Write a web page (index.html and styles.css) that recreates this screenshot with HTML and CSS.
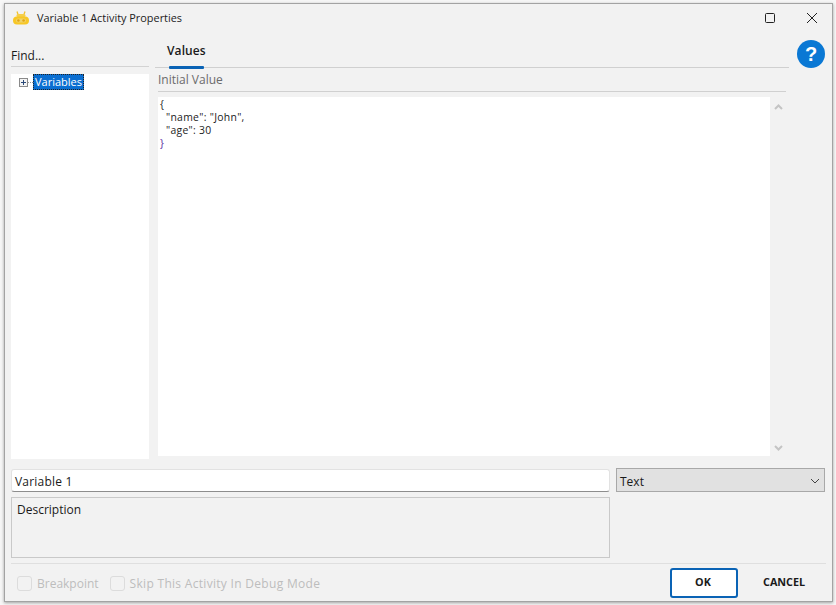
FILE: index.html
```html
<!DOCTYPE html>
<html lang="en">
<head>
<meta charset="utf-8">
<title>Variable 1 Activity Properties</title>
<link rel="stylesheet" href="styles.css">
</head>
<body>
<div class="window">
  <header class="titlebar">
    <svg class="logo" viewBox="0 0 16 14" width="16" height="14">
      <path d="M4 0.5 L5.2 4 M12 0.5 L10.8 4" stroke="#f2c230" stroke-width="1.3" fill="none"/>
      <rect x="3.5" y="3" width="9" height="3" rx="1.5" fill="#f5cf4a"/>
      <rect x="0" y="5.5" width="16" height="8" rx="4" fill="#f7c726"/>
      <rect x="3" y="7.5" width="10" height="4" rx="2" fill="#f0d46a"/>
      <circle cx="5.4" cy="9.5" r="1.3" fill="#e3a412"/>
      <circle cx="10.6" cy="9.5" r="1.3" fill="#e3a412"/>
    </svg>
    <span class="title">Variable 1 Activity Properties</span>
    <svg class="winbtn maxbtn" viewBox="0 0 10 10" width="10" height="10"><rect x="0.5" y="0.5" width="9" height="9" rx="1" fill="none" stroke="#222"/></svg>
    <svg class="winbtn closebtn" viewBox="0 0 10 10" width="10" height="10"><path d="M0 0 L10 10 M10 0 L0 10" stroke="#222" stroke-width="1" fill="none"/></svg>
  </header>
  <div class="content">
    <div class="upper">
      <aside class="sidebar">
        <div class="find">Find...</div>
        <div class="tree">
          <div class="tree-row">
            <svg class="expander" viewBox="0 0 9 9" width="9" height="9"><rect x="0.5" y="0.5" width="8" height="8" fill="#f4f4f4" stroke="#8a8a8a"/><path d="M2 4.5H7M4.5 2V7" stroke="#2b4a78"/></svg>
            <span class="dots"></span>
            <span class="tree-label">Variables</span>
          </div>
        </div>
      </aside>
      <main class="main">
        <div class="tabs"><div class="tab">Values</div></div>
        <div class="field-label">Initial Value</div>
        <div class="editor">
          <pre class="code">{
  "name": "John",
  "age": 30
<span class="brace">}</span></pre>
          <div class="scrollbar">
            <svg viewBox="0 0 9 6" width="9" height="6"><path d="M1 5 L4.5 1.5 L8 5" stroke="#c4c4c4" stroke-width="2" fill="none"/></svg>
            <svg viewBox="0 0 9 6" width="9" height="6"><path d="M1 1 L4.5 4.5 L8 1" stroke="#c4c4c4" stroke-width="2" fill="none"/></svg>
          </div>
        </div>
      </main>
      <div class="helpcol">
        <div class="help">?</div>
      </div>
    </div>
    <div class="lower">
      <div class="lower-left">
        <div class="name-input">Variable 1</div>
        <div class="description">Description</div>
      </div>
      <div class="select">
        <span>Text</span>
        <svg viewBox="0 0 10 6" width="10" height="6"><path d="M1 1 L5 5 L9 1" stroke="#444" stroke-width="1" fill="none"/></svg>
      </div>
    </div>
    <footer class="footer">
      <label class="check"><span class="box"></span>Breakpoint</label>
      <label class="check skip"><span class="box"></span>Skip This Activity In Debug Mode</label>
      <div class="spacer"></div>
      <button class="btn ok">OK</button>
      <button class="btn cancel">CANCEL</button>
    </footer>
  </div>
</div>
</body>
</html>
```
FILE: styles.css
```css
* { box-sizing: border-box; }
html, body { margin: 0; height: 100%; background: #f7f7f7; }
body {
  padding: 3px 3px 3px 4px;
  font-family: "Open Sans", "Noto Sans", sans-serif;
  font-size: 12px;
  color: #1a1a1a;
  overflow: hidden;
}
.window {
  width: 829px;
  height: 599px;
  border: 1px solid #a3a3a3;
  background: #f2f2f2;
  box-shadow: 0 1px 3px rgba(0,0,0,.35);
  display: flex;
  flex-direction: column;
}
.titlebar {
  height: 29px;
  display: flex;
  align-items: center;
  padding: 0 0 2px 8px;
  flex: none;
}
.logo { margin-right: 8px; }
.title { font-size: 10.9px; color: #222; }
.winbtn { flex: none; }
.maxbtn { margin-left: auto; margin-right: 32px; }
.closebtn { margin-right: 15px; }
.content {
  flex: 1;
  display: flex;
  flex-direction: column;
  padding: 0 6px 0 6px;
}
.upper { display: flex; height: 426px; flex: none; }
.sidebar { width: 138px; flex: none; display: flex; flex-direction: column; }
.find {
  height: 34px;
  padding-top: 14px;
  border-bottom: 1px solid #d3d3d3;
  line-height: 17px;
  margin-bottom: 7px;
}
.tree { background: #fff; flex: 1; padding-left: 8px; }
.tree-row { display: flex; align-items: center; height: 16px; }
.expander { flex: none; }
.dots { width: 5px; border-top: 1px dotted #999; }
.tree-label {
  background: #0a6ed1;
  color: #fff;
  line-height: 14px;
  height: 16px;
  padding: 0 1px;
  border: 1px dotted #222;
  font-size: 11px;
}
.main { width: 634px; margin-left: 6px; flex: none; display: flex; flex-direction: column; }
.tabs { height: 35px; border-bottom: 1px solid #d0d0d0; padding-left: 12px; flex: none; }
.tab {
  display: inline-block;
  height: 35px;
  padding: 9px 0 0;
  width: 38px;
  font-weight: 600;
  font-size: 12px;
  letter-spacing: .1px;
  line-height: 17px;
  position: relative;
  white-space: nowrap;
}
.tab::after {
  content: "";
  position: absolute;
  left: 2px;
  right: 1px;
  bottom: -1px;
  height: 3px;
  background: #0a63b5;
  border-radius: 1px;
}
.field-label {
  margin-left: 3px;
  margin-right: 3px;
  height: 24px;
  line-height: 23px;
  color: #6b6b6b;
  border-bottom: 1px solid #d0d0d0;
  flex: none;
}
.editor {
  margin: 5px 3px 3px;
  flex: 1;
  background: #fff;
  display: flex;
  min-height: 0;
}
.code {
  flex: 1;
  margin: 0;
  padding: 1px 0 0 2px;
  font-family: "Open Sans", "Noto Sans", sans-serif;
  font-size: 10.4px;
  line-height: 13px;
  letter-spacing: .3px;
  color: #222;
}
.brace { color: #5a2ca0; }
.scrollbar {
  width: 16px;
  background: #f2f2f2;
  display: flex;
  flex-direction: column;
  justify-content: space-between;
  align-items: center;
  padding: 7px 0 5px;
}
.helpcol { flex: 1; }
.help {
  width: 28px;
  height: 28px;
  margin: 7px 0 0 8px;
  border-radius: 50%;
  background: #0a78d4;
  color: #fff;
  font: bold 20px/28px "Liberation Sans", sans-serif;
  text-align: center;
}
.lower { display: flex; gap: 6px; padding-top: 10px; flex: none; height: 104px; }
.lower-left { width: 599px; flex: none; }
.name-input {
  height: 23px;
  background: #fff;
  border: 1px solid #e2e2e2;
  border-bottom: 1px solid #8d8d8d;
  border-radius: 3px;
  padding: 1px 0 0 3px;
  line-height: 21px;
  font-size: 12px;
  letter-spacing: .2px;
}
.description {
  margin-top: 5px;
  height: 61px;
  border: 1px solid #c9c9c9;
  padding: 3px 5px;
  line-height: 18px;
}
.select {
  width: 209px;
  height: 24px;
  margin-top: -1px;
  background: #e1e1e1;
  border: 1px solid #a8a8a8;
  display: flex;
  align-items: center;
  justify-content: space-between;
  padding: 2px 4px 0 3px;
}
.footer {
  flex: 1;
  border-top: 1px solid #dfdfdf;
  display: flex;
  align-items: center;
  padding-left: 6px;
  color: #c2c2c2;
}
.check { display: flex; align-items: center; margin-right: 11px; margin-top: 2px; color: #bdbdbd; }
.skip { letter-spacing: .3px; }
.box {
  width: 15px;
  height: 15px;
  border: 1px solid #dcdcdc;
  border-radius: 3px;
  margin-right: 5px;
}
.spacer { flex: 1; }
.btn {
  font-family: "Open Sans", "Noto Sans", sans-serif;
  font-weight: 700;
  font-size: 10.8px;
  color: #1a1a1a;
  background: none;
  border: none;
  cursor: default;
  padding: 0 0 2px;
}
.ok {
  width: 68px;
  height: 30px;
  background: #fff;
  border: 2px solid #0a63b5;
  border-radius: 3px;
  margin-right: 25px;
  padding-right: 2px;
}
.cancel { width: 42px; margin-right: 21px; white-space: nowrap; }
```
